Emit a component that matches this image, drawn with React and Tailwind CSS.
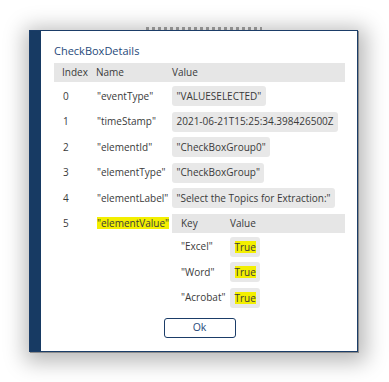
import React from 'react';

const NAVY = 'border-[#1b3d68]';

// Grey rounded value chip
const Chip = ({ children }) => (
  <span className="inline-flex items-center h-[20px] px-[4.5px] rounded-[3px] bg-[#e8e8e8] whitespace-nowrap">
    {children}
  </span>
);

const Hl = ({ children }) => (
  <span className="bg-[#f3ef00] leading-[12px] inline-block">{children}</span>
);

const App = () => {
  const rows = [
    { i: 0, name: '"eventType"', value: '"VALUESELECTED"' },
    { i: 1, name: '"timeStamp"', value: '2021-06-21T15:25:34.398426500Z' },
    { i: 2, name: '"elementId"', value: '"CheckBoxGroup0"' },
    { i: 3, name: '"elementType"', value: '"CheckBoxGroup"' },
    { i: 4, name: '"elementLabel"', value: '"Select the Topics for Extraction:"' },
  ];
  const nested = ['"Excel"', '"Word"', '"Acrobat"'];

  return (
    <div className="w-[389px] h-[382px] bg-white relative overflow-hidden font-['Open_Sans',sans-serif] text-[#3a3a3a] text-[10px]">
      {/* edge of the window behind the dialog */}
      <div className="absolute top-[27px] left-[146px] h-[3px] w-[116px] bg-[repeating-linear-gradient(90deg,#6a6a6a_0_3px,transparent_3px_6px)] opacity-60" />

      <div className="pt-[30px] pl-[29px]">
        <div className={`relative z-10 w-[329px] h-[322px] flex border ${NAVY} bg-white shadow-[1px_1px_0_#8c8c8c,2px_4px_20px_6px_rgba(0,0,0,0.28)]`}>
          <div className="w-[11px] bg-[#173a63] shrink-0" />

          <div className="flex-1 flex flex-col pl-[13px] pr-[12px] pt-[12px]">
            <h2 className="text-[11px] leading-[15px] text-[#1f4a7a] mb-[5px]">CheckBoxDetails</h2>

            {/* header */}
            <div className="flex items-center h-[19px] bg-[#e6e6e6]">
              <div className="w-[42px] pl-[8px]">Index</div>
              <div className="w-[76px]">Name</div>
              <div>Value</div>
            </div>

            <div className="flex flex-col gap-[5.5px] mt-[4px]">
              {rows.map(r => (
                <div key={r.i} className="flex items-center h-[20px]">
                  <div className="w-[42px] pl-[9px]">{r.i}</div>
                  <div className="w-[76px] pl-[1px]">{r.name}</div>
                  <Chip>{r.value}</Chip>
                </div>
              ))}

              {/* row 5 with nested table */}
              <div className="flex items-start">
                <div className="w-[42px] pl-[9px] h-[19px] flex items-center">5</div>
                <div className="w-[76px] pl-[1px] h-[19px] flex items-center">
                  <Hl>"elementValue"</Hl>
                </div>
                <div className="flex-1 flex flex-col">
                  <div className="flex items-center h-[19px] bg-[#e6e6e6]">
                    <div className="w-[58px] pl-[9px]">Key</div>
                    <div>Value</div>
                  </div>
                  <div className="flex flex-col gap-[5.5px] mt-[4px]">
                    {nested.map(k => (
                      <div key={k} className="flex items-center h-[20px]">
                        <div className="w-[58px] pl-[9px]">{k}</div>
                        <Chip><Hl>True</Hl></Chip>
                      </div>
                    ))}
                  </div>
                </div>
              </div>
            </div>

            <div className="flex justify-center mt-[10px]">
              <button className={`w-[72px] h-[20px] border ${NAVY} rounded-[3px] text-[10.5px] text-[#1f4a7a] leading-none`}>
                Ok
              </button>
            </div>
          </div>
        </div>
      </div>
    </div>
  );
};

export default App;
